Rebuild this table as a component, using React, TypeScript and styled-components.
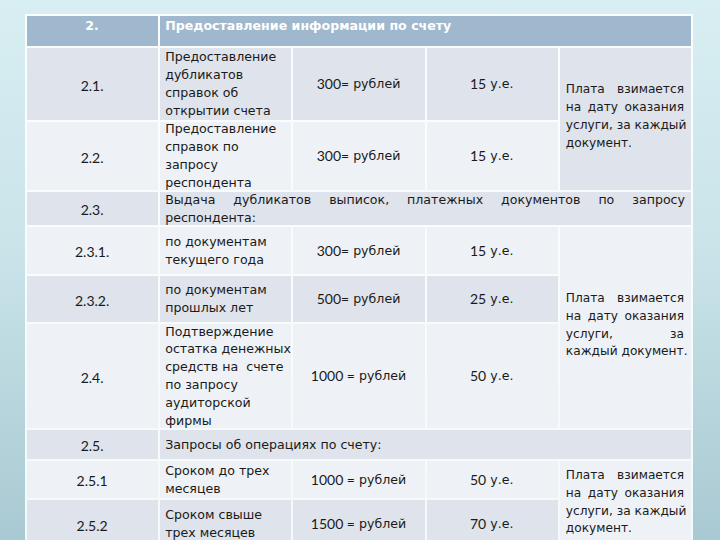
import React from 'react';
import styled, { createGlobalStyle } from 'styled-components';

const GlobalStyle = createGlobalStyle`
  html, body {
    margin: 0;
    padding: 0;
    overflow: hidden;
  }
  body {
    background: linear-gradient(180deg, #d8eef2 0%, #cae4ea 45%, #a9c9d2 100%);
    font-family: 'DejaVu Sans', 'Liberation Sans', sans-serif;
  }
`;

const Slide = styled.div`
  width: 720px;
  height: 540px;
  overflow: hidden;
  padding: 14px 27px 0 25px;
  box-sizing: border-box;
`;

const Table = styled.div`
  display: grid;
  grid-template-columns: repeat(5, 1fr);
  grid-template-rows: 30px 72px 68px 33px 47px 46px 104px 29px 37px 48px;
  gap: 2px;
  padding: 2px;
  background: rgba(255, 255, 255, 0.88);
  color: #1a1a1a;
`;

type Tone = 'head' | 'dark' | 'light';

const toneBg: Record<Tone, string> = {
  head: '#a0b8cd',
  dark: '#dfe3eb',
  light: '#eef2f6',
};

const Cell = styled.div<{ $tone: Tone; $span?: number; $rows?: number }>`
  background: ${(p) => toneBg[p.$tone]};
  grid-column: ${(p) => (p.$span ? `span ${p.$span}` : 'auto')};
  grid-row: ${(p) => (p.$rows ? `span ${p.$rows}` : 'auto')};
  display: flex;
  align-items: center;
  padding: 0 6px 0 5px;
  min-width: 0;
  font-size: 12.6px;
  line-height: 17.8px;
`;

const NumCell = styled(Cell)`
  justify-content: center;
  font-family: Lato, 'Liberation Sans', sans-serif;
  font-size: 14px;
  padding-top: 3px;
`;

const HeadCell = styled(Cell)`
  align-items: flex-start;
  padding-top: 1px;
  color: #ffffff;
  font-weight: 700;
`;

const HeadNum = styled(HeadCell)`
  justify-content: center;
`;

const TextCell = styled(Cell)`
  white-space: pre;
`;

const WideCell = styled(Cell)`
  text-align: justify;
  word-spacing: 3px;
`;

const CenterCell = styled(Cell)`
  justify-content: center;
  white-space: nowrap;
`;

const Digits = styled.span`
  font-family: Lato, 'Liberation Sans', sans-serif;
  font-size: 14px;
  margin-right: 4px;
`;

const NoteCell = styled(Cell)`
  flex-direction: column;
  align-items: stretch;
  justify-content: center;
  padding: 0 7px 4px 6px;
  font-size: 12.2px;
`;

const NoteLine = styled.div<{ $last?: boolean }>`
  text-align: ${(p) => (p.$last ? 'left' : 'justify')};
  text-align-last: ${(p) => (p.$last ? 'left' : 'justify')};
  white-space: nowrap;
`;

const Note = ({ lines, tone, rows }: { lines: string[]; tone: Tone; rows: number }) => (
  <NoteCell $tone={tone} $rows={rows}>
    {lines.map((l, i) => (
      <NoteLine key={i} $last={i === lines.length - 1}>
        {l}
      </NoteLine>
    ))}
  </NoteCell>
);

const Price = ({ tone, sum, sep }: { tone: Tone; sum: string; sep: string }) => (
  <CenterCell $tone={tone}>
    <Digits>{sum + sep}</Digits>рублей
  </CenterCell>
);

const Fee = ({ tone, value }: { tone: Tone; value: string }) => (
  <CenterCell $tone={tone}>
    <Digits>{value}</Digits>у.е.
  </CenterCell>
);

const noteA = ['Плата взимается', 'на дату оказания', 'услуги, за каждый', 'документ.'];
const noteB = ['Плата взимается', 'на дату оказания', 'услуги,          за', 'каждый документ.'];

const App = () => {
  return (
    <Slide>
      <GlobalStyle />
      <Table>
        <HeadNum $tone="head">2.</HeadNum>
        <HeadCell $tone="head" $span={4}>
          Предоставление информации по счету
        </HeadCell>

        <NumCell $tone="dark">2.1.</NumCell>
        <TextCell $tone="dark">{'Предоставление\nдубликатов\nсправок об\nоткрытии счета'}</TextCell>
        <Price tone="dark" sum="300" sep="=" />
        <Fee tone="dark" value="15" />
        <Note lines={noteA} tone="dark" rows={2} />

        <NumCell $tone="light">2.2.</NumCell>
        <TextCell $tone="light">{'Предоставление\nсправок по\nзапросу\nреспондента'}</TextCell>
        <Price tone="light" sum="300" sep="=" />
        <Fee tone="light" value="15" />

        <NumCell $tone="dark">2.3.</NumCell>
        <WideCell $tone="dark" $span={4}>
          Выдача дубликатов выписок, платежных документов по запросу респондента:
        </WideCell>

        <NumCell $tone="light">2.3.1.</NumCell>
        <TextCell $tone="light">{'по документам\nтекущего года'}</TextCell>
        <Price tone="light" sum="300" sep="=" />
        <Fee tone="light" value="15" />
        <Note lines={noteB} tone="light" rows={3} />

        <NumCell $tone="dark">2.3.2.</NumCell>
        <TextCell $tone="dark">{'по документам\nпрошлых лет'}</TextCell>
        <Price tone="dark" sum="500" sep="=" />
        <Fee tone="dark" value="25" />

        <NumCell $tone="light">2.4.</NumCell>
        <TextCell $tone="light">
          {'Подтверждение\nостатка денежных\nсредств на  счете\nпо запросу\nаудиторской\nфирмы'}
        </TextCell>
        <Price tone="light" sum="1000" sep=" =" />
        <Fee tone="light" value="50" />

        <NumCell $tone="dark">2.5.</NumCell>
        <TextCell $tone="dark" $span={4}>
          Запросы об операциях по счету:
        </TextCell>

        <NumCell $tone="light">2.5.1</NumCell>
        <TextCell $tone="light">{'Сроком до трех\nмесяцев'}</TextCell>
        <Price tone="light" sum="1000" sep=" =" />
        <Fee tone="light" value="50" />
        <Note lines={noteA} tone="light" rows={2} />

        <NumCell $tone="dark">2.5.2</NumCell>
        <TextCell $tone="dark">{'Сроком свыше\nтрех месяцев'}</TextCell>
        <Price tone="dark" sum="1500" sep=" =" />
        <Fee tone="dark" value="70" />
      </Table>
    </Slide>
  );
};

export default App;
